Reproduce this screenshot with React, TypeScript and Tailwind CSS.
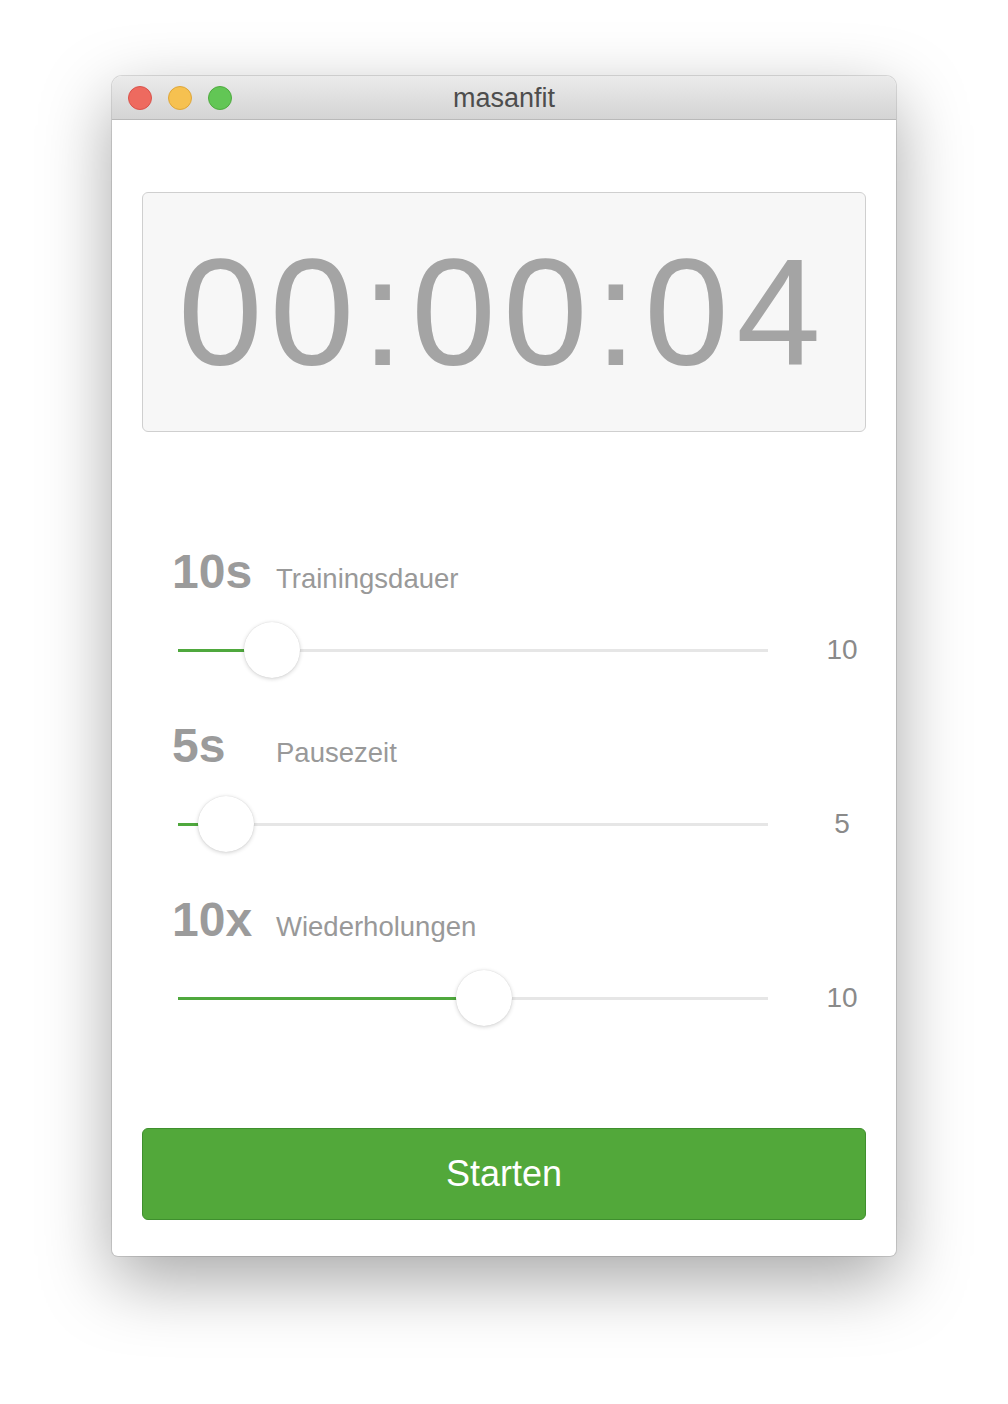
const sliders = [
  { value: "10s", label: "Trainingsdauer", count: "10", pos: 15.93 },
  { value: "5s", label: "Pausezeit", count: "5", pos: 8.14 },
  { value: "10x", label: "Wiederholungen", count: "10", pos: 51.86 },
];

function Slider({ pos }: { pos: number }) {
  return (
    <div className="relative h-[56px] w-[590px]">
      <div className="absolute left-0 right-0 top-[27px] h-[3px] bg-[#e6e6e6]" />
      <div
        className="absolute left-0 top-[27px] h-[3px] bg-[#4fa83d]"
        style={{ width: `${pos}%` }}
      />
      <div
        className="absolute top-0 h-[56px] w-[56px] -translate-x-1/2 rounded-full bg-white shadow-[0_1px_4px_rgba(0,0,0,0.18),0_0_1px_rgba(0,0,0,0.15)]"
        style={{ left: `${pos}%` }}
      />
    </div>
  );
}

export default function App() {
  return (
    <div
      className="min-h-[1404px] w-[1008px] bg-white px-[112px] pt-[76px]"
      style={{ fontFamily: '"Liberation Sans", Arial, sans-serif' }}
    >
      <div className="overflow-hidden rounded-t-[10px] rounded-b-[6px] bg-white shadow-[0_24px_70px_rgba(0,0,0,0.35),0_0_0_1px_rgba(0,0,0,0.12)]">
        {/* title bar */}
        <div className="relative flex h-[44px] items-center border-b border-[#b9b9b9] bg-gradient-to-b from-[#ebebeb] to-[#d4d4d4] px-[16px]">
          <div className="flex gap-[16px]">
            <span className="h-[24px] w-[24px] rounded-full border border-[#d9534c] bg-[#ee6a5f]" />
            <span className="h-[24px] w-[24px] rounded-full border border-[#dea63a] bg-[#f6c150]" />
            <span className="h-[24px] w-[24px] rounded-full border border-[#4faa3f] bg-[#62c655]" />
          </div>
          <div className="absolute inset-0 flex items-center justify-center pt-[2px] text-[27px] text-[#4d4d4d]">
            masanfit
          </div>
        </div>

        <div className="px-[30px] pb-[36px] pt-[72px]">
          {/* timer */}
          <div className="flex h-[240px] items-center justify-center rounded-[6px] border border-[#cfcfcf] bg-[#f7f7f7]">
            <span className="pr-[2px] text-[152px] leading-none tracking-[7.3px] text-[#a4a4a4]">
              00:00:04
            </span>
          </div>

          {/* sliders */}
          <div className="mt-[116px] flex flex-col gap-[44px]">
            {sliders.map((s) => (
              <div key={s.label}>
                <div className="flex h-[48px] items-baseline pl-[30px]">
                  <span className="w-[104px] text-[48px] font-bold leading-[48px] text-[#9b9b9b]">
                    {s.value}
                  </span>
                  <span className="text-[27.5px] leading-none text-[#999999]">{s.label}</span>
                </div>
                <div className="mt-[26px] flex items-center pl-[36px]">
                  <Slider pos={s.pos} />
                  <span className="ml-[50px] w-[48px] text-center text-[28px] text-[#8a8a8a]">
                    {s.count}
                  </span>
                </div>
              </div>
            ))}
          </div>

          {/* button */}
          <button className="mt-[102px] flex h-[92px] w-full items-center justify-center rounded-[6px] border border-[#3f8f2e] bg-[#52a83a] text-[36px] text-white">
            Starten
          </button>
        </div>
      </div>
    </div>
  );
}
